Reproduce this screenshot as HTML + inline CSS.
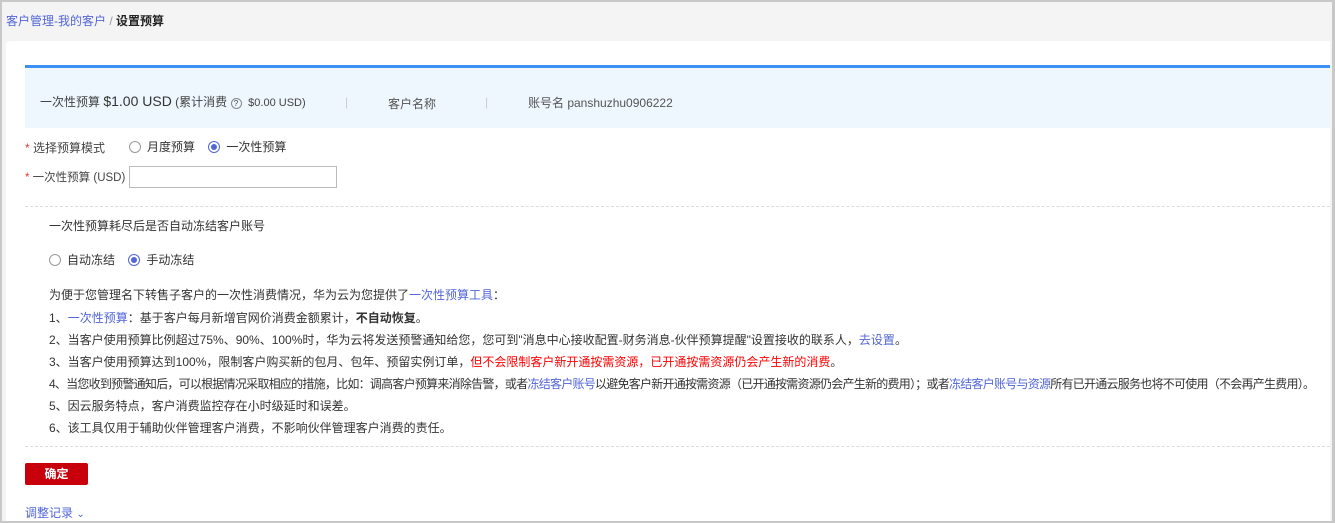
<!DOCTYPE html>
<html><head><meta charset="utf-8"><style>
*{margin:0;padding:0;box-sizing:border-box}
body{width:1335px;height:523px;overflow:hidden;background:#f4f4f4;font-family:"Liberation Sans","Noto Sans CJK SC",sans-serif;font-size:12px;color:#333;position:relative}
.frame{position:absolute;left:0;top:0;width:1335px;height:523px;border:2px solid #c8c8c8;border-right:3px solid #c8c8c8;border-bottom:2px solid #c8c8c8}
.a{position:absolute;white-space:nowrap}
.blue{color:#5266d6}
.red{color:#f00}
.card{position:absolute;left:6px;top:41px;width:1324px;height:480px;background:#fff;border-radius:4px 0 0 0}
.info{position:absolute;left:25px;top:65px;width:1305px;height:63px;background:#eef6fe;border-top:3px solid #3d91f0}
.radio{display:inline-block;width:12px;height:12px;border:1px solid #999;border-radius:50%;vertical-align:-2px;margin-right:6px;position:relative}
.radio.on{border-color:#5266d6}
.radio.on:after{content:"";position:absolute;left:2px;top:2px;width:6px;height:6px;border-radius:50%;background:#5266d6}
.dash{position:absolute;left:25px;width:1305px;border-top:1px dashed #ddd}
.star{color:#e33}
</style></head><body>
<div class="a" style="left:6px;top:12px;font-size:12px"><span class="blue">客户管理-我的客户</span> <span style="color:#999">/</span> <b style="color:#222">设置预算</b></div>
<div class="card"></div>
<div class="info"></div>
<div class="a" style="left:40px;top:93px;font-size:12px;color:#444">一次性预算 <span style="font-size:14px;color:#333">$1.00 USD</span> (累计消费 <span style="display:inline-block;width:11px;height:11px;border:1px solid #888;border-radius:50%;font-size:8px;text-align:center;line-height:9px;vertical-align:0">?</span> &nbsp;<span style="font-size:11px">$0.00 USD)</span></div>
<div class="a" style="left:345px;top:95px;color:#ccc">|</div>
<div class="a" style="left:388px;top:95px;color:#555">客户名称</div>
<div class="a" style="left:485px;top:95px;color:#ccc">|</div>
<div class="a" style="left:528px;top:94px;color:#555">账号名 panshuzhu0906222</div>
<div class="a" style="left:25px;top:139px;color:#444"><span class="star">*</span> 选择预算模式</div>
<div class="a" style="left:129px;top:138px;color:#333"><span class="radio"></span>月度预算 &nbsp;&nbsp;&nbsp;<span class="radio on"></span>一次性预算</div>
<div class="a" style="left:25px;top:169px;color:#444;font-size:11.5px"><span class="star">*</span> 一次性预算 (USD)</div>
<div class="a" style="left:129px;top:166px;width:208px;height:22px;border:1px solid #bbb"></div>
<div class="dash" style="top:206px"></div>
<div class="a" style="left:49px;top:217px">一次性预算耗尽后是否自动冻结客户账号</div>
<div class="a" style="left:49px;top:251px"><span class="radio"></span>自动冻结 &nbsp;&nbsp;&nbsp;<span class="radio on"></span>手动冻结</div>
<div class="a" style="left:49px;top:286px">为便于您管理名下转售子客户的一次性消费情况，华为云为您提供了<span class="blue">一次性预算工具</span>：</div>
<div class="a" style="left:49px;top:309px">1、<span class="blue">一次性预算</span>：基于客户每月新增官网价消费金额累计，<b>不自动恢复</b>。</div>
<div class="a" style="left:49px;top:331px">2、当客户使用预算比例超过75%、90%、100%时，华为云将发送预警通知给您，您可到"消息中心接收配置-财务消息-伙伴预算提醒"设置接收的联系人，<span class="blue">去设置</span>。</div>
<div class="a" style="left:49px;top:353px">3、当客户使用预算达到100%，限制客户购买新的包月、包年、预留实例订单，<span class="red">但不会限制客户新开通按需资源，已开通按需资源仍会产生新的消费</span>。</div>
<div class="a" style="left:49px;top:375px;letter-spacing:-0.75px">4、当您收到预警通知后，可以根据情况采取相应的措施，比如：调高客户预算来消除告警，或者<span class="blue">冻结客户账号</span>以避免客户新开通按需资源（已开通按需资源仍会产生新的费用）；或者<span class="blue">冻结客户账号与资源</span>所有已开通云服务也将不可使用（不会再产生费用）。</div>
<div class="a" style="left:49px;top:397px">5、因云服务特点，客户消费监控存在小时级延时和误差。</div>
<div class="a" style="left:49px;top:419px">6、该工具仅用于辅助伙伴管理客户消费，不影响伙伴管理客户消费的责任。</div>
<div class="dash" style="top:446px"></div>
<div class="a" style="left:25px;top:463px;width:63px;height:22px;background:#c7000b;border-radius:2px;color:#fff;text-align:center;line-height:22px;font-weight:bold">确定</div>
<div class="a blue" style="left:25px;top:504px">调整记录 <span style="font-size:10px">⌄</span></div>
<div class="frame"></div>
</body></html>
